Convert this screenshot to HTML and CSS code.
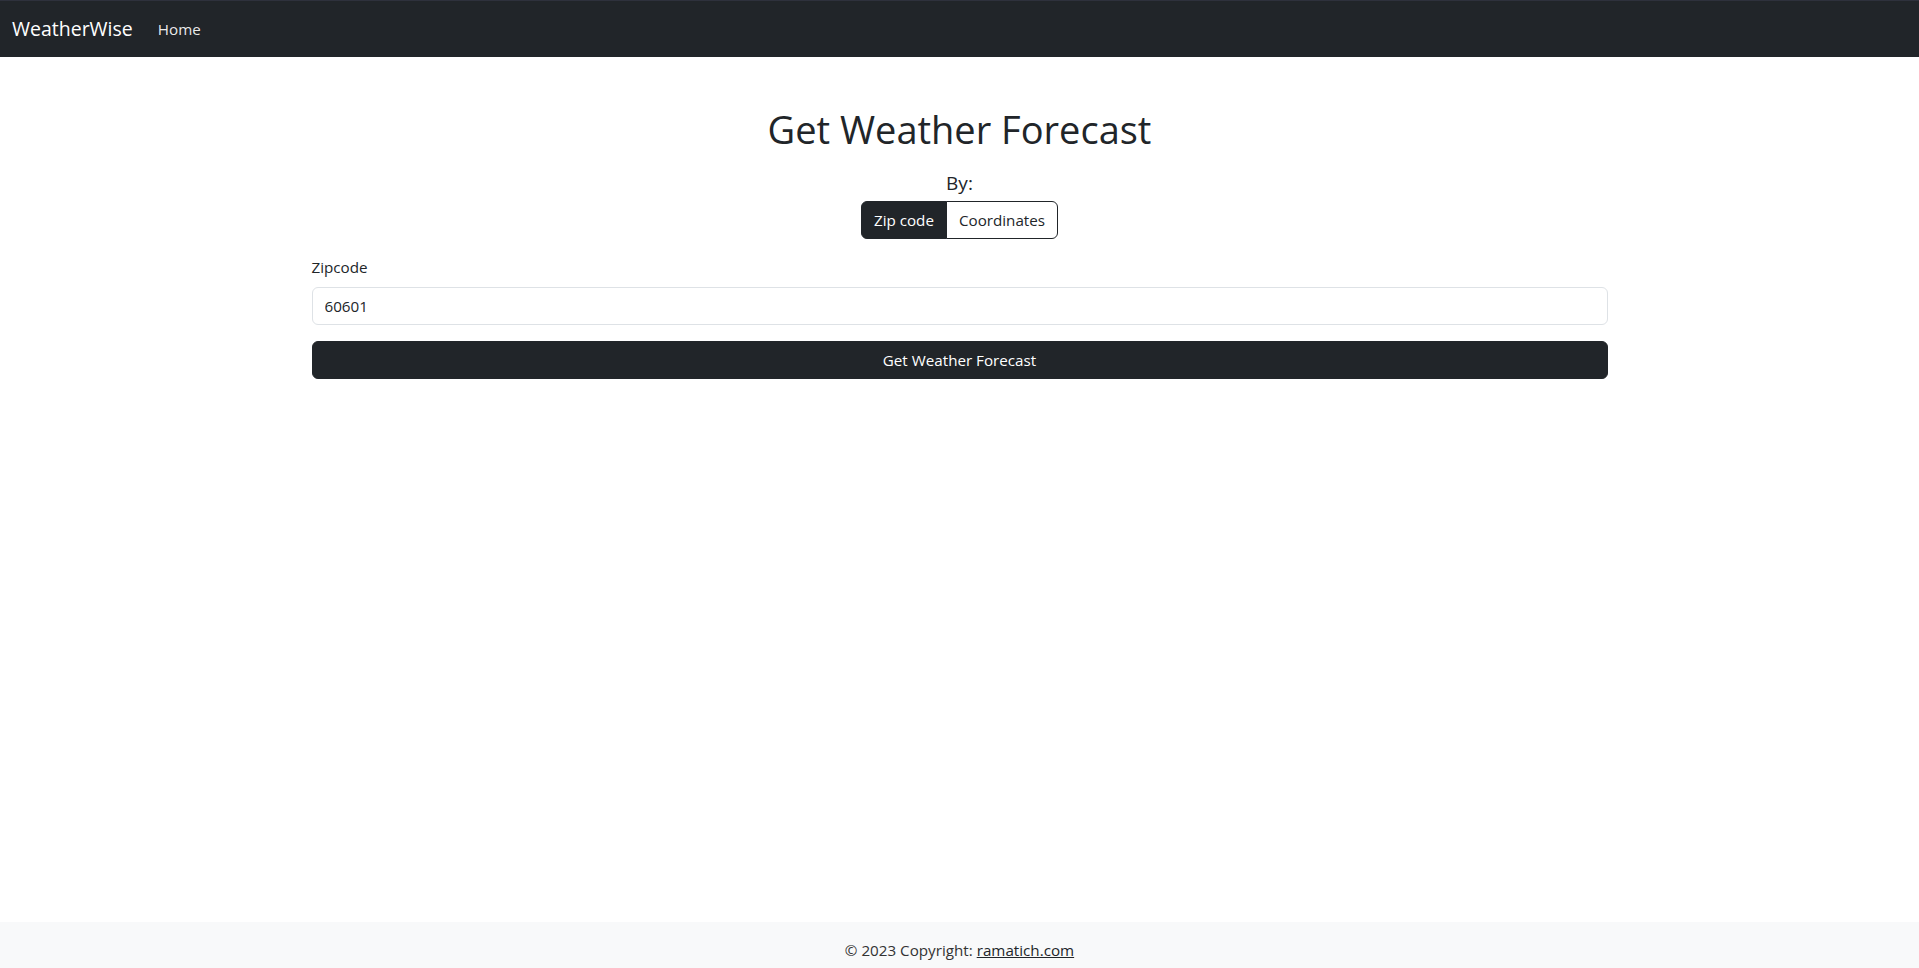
FILE: index.html
```html
<!DOCTYPE html>
<html lang="en">
<head>
<meta charset="utf-8">
<title>WeatherWise</title>
<link rel="stylesheet" href="styles.css">
</head>
<body>
<div class="page">
  <nav class="navbar">
    <div class="navbar-inner">
      <a class="brand" href="#">WeatherWise</a>
      <a class="nav-link" href="#">Home</a>
    </div>
  </nav>
  <main class="main">
    <div class="container">
      <h1 class="title">Get Weather Forecast</h1>
      <div class="by">By:</div>
      <div class="toggle-row">
        <div class="btn-group">
          <button class="toggle-btn active" type="button">Zip code</button>
          <button class="toggle-btn" type="button">Coordinates</button>
        </div>
      </div>
      <form class="form">
        <label class="form-label" for="zip">Zipcode</label>
        <input class="form-control" id="zip" type="text" value="60601">
        <button class="submit-btn" type="button">Get Weather Forecast</button>
      </form>
    </div>
  </main>
  <footer class="footer">
    © 2023 Copyright: <a class="footer-link" href="#">ramatich.com</a>
  </footer>
</div>
</body>
</html>
```

FILE: styles.css
```css
* { box-sizing: border-box; }
html, body { margin: 0; padding: 0; }
body {
  font-family: "Open Sans", "Noto Sans", sans-serif;
  font-size: 15.2px;
  line-height: 24px;
  color: #212529;
  background: #fff;
}
.page {
  min-height: calc(100vh + 10px);
  display: flex;
  flex-direction: column;
}
.navbar {
  background: #212529;
  border-top: 1px solid #2e313c;
}
.navbar-inner {
  display: flex;
  align-items: center;
  padding: 8px 12px;
}
.brand {
  color: #fff;
  font-size: 19.5px;
  line-height: 30px;
  padding: 5px 0;
  margin-right: 17px;
  text-decoration: none;
}
.nav-link {
  color: rgba(255, 255, 255, 0.92);
  padding: 8px;
  text-decoration: none;
}
.main { flex: 1; }
.container {
  max-width: 1320px;
  margin: 0 auto;
  padding: 0 12px;
}
.title {
  margin: 48px 0 8px;
  font-size: 38px;
  line-height: 48px;
  font-weight: 400;
  text-align: center;
}
.by {
  margin: 18px 0 6px;
  font-size: 19px;
  line-height: 24px;
  text-align: center;
}
.toggle-row {
  display: flex;
  justify-content: center;
  margin-bottom: 16px;
}
.btn-group { display: flex; }
.toggle-btn {
  font-family: inherit;
  font-size: 15.2px;
  line-height: 24px;
  padding: 6px 12px;
  border: 1px solid #212529;
  background: #fff;
  color: #212529;
  margin: 0;
}
.toggle-btn:first-child { border-radius: 6px 0 0 6px; }
.toggle-btn:last-child { border-radius: 0 6px 6px 0; margin-left: -1px; }
.toggle-btn.active { background: #212529; color: #fff; }
.form { display: flex; flex-direction: column; }
.form-label { margin-bottom: 8px; }
.form-control {
  font-family: inherit;
  font-size: 15.2px;
  line-height: 24px;
  padding: 6px 12px;
  border: 1px solid #dee2e6;
  border-radius: 6px;
  color: #212529;
  margin-bottom: 16px;
  width: 100%;
}
.submit-btn {
  font-family: inherit;
  font-size: 15.2px;
  line-height: 24px;
  padding: 6px 12px;
  border: 1px solid #212529;
  border-radius: 6px;
  background: #212529;
  color: #fff;
  width: 100%;
}
.footer {
  background: #f8f9fa;
  padding: 16px;
  text-align: center;
  color: #333;
}
.footer-link { color: #212529; }
```
